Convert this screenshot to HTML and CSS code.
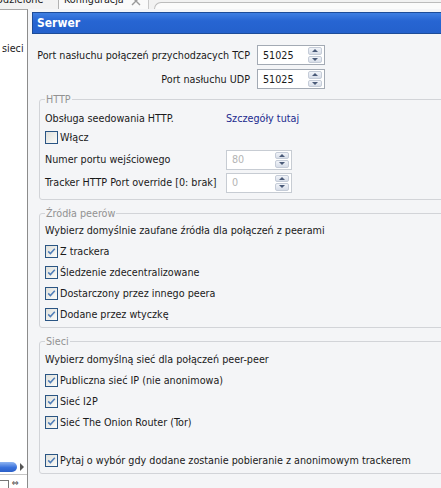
FILE: index.html
```html
<!DOCTYPE html>
<html lang="pl">
<head>
  <meta charset="UTF-8" />
  <title>Konfiguracja</title>
  <link rel="stylesheet" href="styles.css">
</head>
<body>
  <!-- Tab strip (only the bottom of it is visible) -->
  <div class="tabstrip">
    <span class="tab tab-prev">Udzielone</span>
    <span class="tab tab-active">Konfiguracja
      <svg class="tab-close" width="10" height="10" viewBox="0 0 10 10"><path d="M1 1 L9 9 M9 1 L1 9" stroke="#9a9a9a" stroke-width="1.4" fill="none"/></svg>
    </span>
    <span class="tab-rest"></span>
  </div>

  <div class="frame">
    <aside class="sidebar">
      <div class="side-item">sieci</div>
      <div class="side-scroll"><span class="thumb"></span><span class="arrow"></span></div>
      <div class="side-foot"><span class="mini-box"></span><span class="mini-icon">&#8660;</span></div>
    </aside>

    <main class="panel">
      <div class="panel-title">Serwer</div>

      <div class="ports">
        <label>Port nasłuchu połączeń przychodzacych TCP</label>
        <div class="spin">
          <span class="spin-value">51025</span>
          <span class="spin-btns"><i class="up"></i><i class="down"></i></span>
        </div>
        <label>Port nasłuchu UDP</label>
        <div class="spin">
          <span class="spin-value">51025</span>
          <span class="spin-btns"><i class="up"></i><i class="down"></i></span>
        </div>
      </div>

      <fieldset class="group group-http">
        <legend>HTTP</legend>
        <div class="row row-text">
          <span class="col-label">Obsługa seedowania HTTP.</span>
          <span class="link">Szczegóły tutaj</span>
        </div>
        <div class="row row-check-small">
          <span class="cb"></span><span>Włącz</span>
        </div>
        <div class="row row-spin">
          <span class="col-label">Numer portu wejściowego</span>
          <div class="spin spin-small disabled">
            <span class="spin-value">80</span>
            <span class="spin-btns"><i class="up"></i><i class="down"></i></span>
          </div>
        </div>
        <div class="row row-spin row-spin-2">
          <span class="col-label">Tracker HTTP Port override [0: brak]</span>
          <div class="spin spin-small disabled">
            <span class="spin-value">0</span>
            <span class="spin-btns"><i class="up"></i><i class="down"></i></span>
          </div>
        </div>
      </fieldset>

      <fieldset class="group group-peers">
        <legend>Źródła peerów</legend>
        <div class="row row-intro">Wybierz domyślnie zaufane źródła dla połączeń z peerami</div>
        <div class="row row-check"><span class="cb checked"><svg viewBox="0 0 11 11"><path d="M2.2 5.4 L4.4 7.6 L8.8 2.8"/></svg></span><span>Z trackera</span></div>
        <div class="row row-check"><span class="cb checked"><svg viewBox="0 0 11 11"><path d="M2.2 5.4 L4.4 7.6 L8.8 2.8"/></svg></span><span>Śledzenie zdecentralizowane</span></div>
        <div class="row row-check"><span class="cb checked"><svg viewBox="0 0 11 11"><path d="M2.2 5.4 L4.4 7.6 L8.8 2.8"/></svg></span><span>Dostarczony przez innego peera</span></div>
        <div class="row row-check"><span class="cb checked"><svg viewBox="0 0 11 11"><path d="M2.2 5.4 L4.4 7.6 L8.8 2.8"/></svg></span><span>Dodane przez wtyczkę</span></div>
      </fieldset>

      <fieldset class="group group-nets">
        <legend>Sieci</legend>
        <div class="row row-intro row-intro-nets">Wybierz domyślną sieć dla połączeń peer-peer</div>
        <div class="row row-check"><span class="cb checked"><svg viewBox="0 0 11 11"><path d="M2.2 5.4 L4.4 7.6 L8.8 2.8"/></svg></span><span>Publiczna sieć IP (nie anonimowa)</span></div>
        <div class="row row-check"><span class="cb checked"><svg viewBox="0 0 11 11"><path d="M2.2 5.4 L4.4 7.6 L8.8 2.8"/></svg></span><span>Sieć I2P</span></div>
        <div class="row row-check"><span class="cb checked"><svg viewBox="0 0 11 11"><path d="M2.2 5.4 L4.4 7.6 L8.8 2.8"/></svg></span><span>Sieć The Onion Router (Tor)</span></div>
        <div class="row row-check row-ask"><span class="cb checked"><svg viewBox="0 0 11 11"><path d="M2.2 5.4 L4.4 7.6 L8.8 2.8"/></svg></span><span>Pytaj o wybór gdy dodane zostanie pobieranie z anonimowym trackerem</span></div>
      </fieldset>
    </main>
  </div>
</body>
</html>
```

FILE: styles.css
```css
body {
  margin: 0;
  width: 441px;
  height: 488px;
  overflow: hidden;
  font-family: "DejaVu Sans Condensed", "Liberation Sans", sans-serif;
  font-size: 10.7px;
  color: #1a1a1a;
  background: #f0f0f0;
}

/* tab strip */
.tabstrip {
  height: 9px;
  display: flex;
  overflow: hidden;
  background: #f2f2f2;
}

.tab {
  line-height: 12px;
  margin-top: -6px;
  white-space: nowrap;
}

.tab-prev {
  width: 62px;
  margin-left: -4px;
  flex: none;
}

.tab-active {
  display: flex;
  gap: 7px;
  padding: 0 7px 0 5px;
  background: #fafafa;
  border-left: 1px solid #b2b2b2;
  border-right: 1px solid #c8c8c8;
}

.tab-close {
  margin-top: 2px;
}

.tab-rest {
  flex: 1;
  margin: 2px 0 0 5px;
  border-top: 1px solid #bcbcbc;
  border-left: 1px solid #bcbcbc;
  border-top-left-radius: 10px;
  background: #fbfbfb;
}

/* frame */
.frame {
  display: flex;
  height: 479px;
}

.sidebar {
  width: 27px;
  flex: none;
  background: #fff;
  border-top: 1px solid #a8a8a8;
  border-right: 1px solid #8c8c8c;
  display: flex;
  flex-direction: column;
}

.side-item {
  padding: 32px 0 0 2px;
  line-height: 13px;
  white-space: nowrap;
}

.side-scroll {
  margin-top: auto;
  margin-bottom: 2px;
  height: 11px;
  display: flex;
  align-items: center;
}

.thumb {
  width: 17px;
  height: 10px;
  border-radius: 0 5px 5px 0;
  background: linear-gradient(#8fb5f2, #3a72dc 55%, #2a5fc8);
}

.arrow {
  margin-left: 3px;
  width: 0;
  height: 0;
  border-top: 4px solid transparent;
  border-bottom: 4px solid transparent;
  border-left: 4px solid #555;
}

.side-foot {
  height: 13px;
  border-top: 1px solid #c4c4c4;
  display: flex;
  align-items: flex-end;
  gap: 3px;
}

.mini-box {
  width: 8px;
  height: 7px;
  border: 1px solid #777;
  border-left: none;
  border-bottom: none;
  background: #fff;
}

.mini-icon {
  font-size: 9px;
  line-height: 9px;
  color: #444;
}

/* main panel */
.panel {
  width: 430px;
  flex: none;
  background: #f4f5f7;
  padding: 3px 0 0 4px;
}

.panel-title {
  height: 20px;
  line-height: 20px;
  padding-left: 4px;
  border: 1px solid #1d4c98;
  background: linear-gradient(#3f7fe2, #2765d2 40%, #2461cc);
  color: #fff;
  font-weight: bold;
  font-size: 12px;
}

.ports {
  display: grid;
  grid-template-columns: 213px 68px;
  column-gap: 7px;
  row-gap: 4px;
  align-items: center;
  margin: 11px 0 0 5px;
}

.ports label {
  text-align: right;
  white-space: nowrap;
}

/* spinner */
.spin {
  box-sizing: border-box;
  height: 20px;
  border: 1px solid #a3aab4;
  background: #fff;
  display: flex;
  align-items: center;
}

.spin-small {
  width: 66px;
}

.spin-value {
  flex: 1;
  padding-left: 5px;
}

.spin-btns {
  width: 14px;
  height: 16px;
  margin-right: 2px;
  display: flex;
  flex-direction: column;
  gap: 1px;
}

.spin-btns i {
  flex: 1;
  border-radius: 2px;
  background: linear-gradient(#f1f4f9, #d7dde8);
  border: 1px solid #c5ccd8;
  display: flex;
  align-items: center;
  justify-content: center;
}

.spin-btns i::after {
  content: "";
  width: 0;
  height: 0;
  border-left: 3px solid transparent;
  border-right: 3px solid transparent;
}

.spin-btns .up::after {
  border-bottom: 3px solid #4a5a78;
}

.spin-btns .down::after {
  border-top: 3px solid #4a5a78;
}

.spin.disabled {
  border-color: #c7ccd3;
}

.spin.disabled .spin-value {
  color: #b4b4b4;
}

/* group boxes */
.group {
  width: 420px;
  min-width: 0;
  margin: 7px 0 0 7px;
  padding: 0 0 2px 5px;
  border: 1px solid #d2d4d8;
  border-radius: 3px;
}

.group-http {
  margin-top: 4px;
  padding-bottom: 6px;
}

.group legend {
  padding: 0 1px;
  line-height: 13px;
  color: #929292;
}

.row {
  display: flex;
  align-items: center;
  white-space: nowrap;
}

.col-label {
  width: 181px;
  flex: none;
}

.link {
  color: #1b2a8e;
}

.row-text {
  height: 24px;
}

.row-check-small {
  height: 15px;
}

.row-spin {
  height: 21px;
  margin-top: 4px;
}

.row-spin-2 {
  margin-top: 2px;
}

.row-intro {
  height: 21px;
}

.row-intro-nets {
  height: 22px;
}

.row-check {
  height: 21px;
}

.row-ask {
  margin-top: 17px;
}

/* checkboxes */
.cb {
  box-sizing: border-box;
  width: 13px;
  height: 13px;
  flex: none;
  margin-right: 2px;
  border: 1px solid #2a5584;
  background: linear-gradient(135deg, #dfe0db, #fbfbf9);
  display: flex;
}

.cb svg {
  width: 11px;
  height: 11px;
}

.cb path {
  fill: none;
  stroke: #4f7db8;
  stroke-width: 1.5;
}
```
